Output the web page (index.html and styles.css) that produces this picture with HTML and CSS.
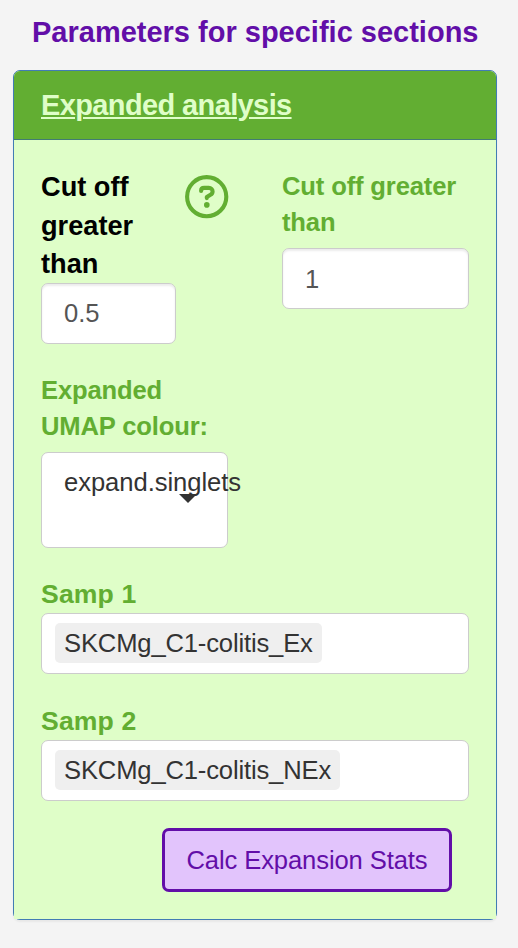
FILE: index.html
```html
<!DOCTYPE html>
<html lang="en">
<head>
<meta charset="utf-8">
<title>Parameters</title>
<link rel="stylesheet" href="styles.css">
</head>
<body>
<h1 class="title">Parameters for specific sections</h1>
<section class="panel">
  <header class="panel-head"><a class="panel-link">Expanded analysis</a></header>
  <div class="panel-body">
    <div class="row cutoffs">
      <div class="cutoff-help">
        <div class="field small">
          <label class="label dark">Cut off<br>greater<br>than</label>
          <div class="control">0.5</div>
        </div>
        <svg class="help" viewBox="0 0 44 44" fill="none" stroke="#62ae32">
          <circle cx="21.7" cy="21.7" r="19.6" stroke-width="4.1"/>
          <path d="M16.1 15.9C16.1 14.1 17.3 12.9 19.1 12.9H23.8C26.1 12.9 27.6 14.4 27.6 16.4C27.6 17.9 26.8 19 25.5 19.7L21.8 21.9V23.1" stroke-width="4.1" stroke-linecap="round" stroke-linejoin="round"/>
          <circle cx="21.8" cy="29.9" r="2.8" fill="#62ae32" stroke="none"/>
        </svg>
      </div>
      <div class="field half">
        <label class="label">Cut off greater<br>than</label>
        <div class="control gap">1</div>
      </div>
    </div>
    <div class="field half umap">
      <label class="label">Expanded<br>UMAP colour:</label>
      <div class="control select gap">expand.singlets<i class="caret"></i></div>
    </div>
    <div class="field samp1">
      <label class="label samp">Samp 1</label>
      <div class="control tags"><span class="tag ex">SKCMg_C1-colitis_Ex</span></div>
    </div>
    <div class="field samp2">
      <label class="label samp">Samp 2</label>
      <div class="control tags"><span class="tag nex">SKCMg_C1-colitis_NEx</span></div>
    </div>
    <button class="calc" type="button">Calc Expansion Stats</button>
  </div>
</section>
</body>
</html>
```
FILE: styles.css
```css
* { box-sizing: border-box; }
body {
  margin: 0;
  height: 948px;
  overflow: hidden;
  background: #f4f4f4;
  font-family: "Liberation Sans", Arial, sans-serif;
  font-size: 25.6px;
  line-height: 36px;
  color: #333;
}
.title {
  margin: 0 0 0 32px;
  padding-top: 12px;
  height: 70px;
  font-size: 29px;
  line-height: 40px;
  color: #620ea8;
  white-space: nowrap;
}
.panel {
  width: 484px;
  height: 850px;
  margin-left: 13px;
  border: 1px solid #427cb4;
  border-radius: 7px;
  background: #dffec8;
  box-shadow: 0 2px 2px rgba(0, 0, 0, .05);
}
.panel-head {
  height: 69px;
  padding: 14px 27px;
  border-bottom: 1px solid #427c72;
  border-radius: 6px 6px 0 0;
  background: #62ae32;
  font-size: 29px;
  line-height: 40px;
  font-weight: 700;
  letter-spacing: -.62px;
}
.panel-link {
  color: #dffec8;
  text-decoration: underline;
  text-decoration-thickness: 2px;
  text-underline-offset: 2px;
}
.panel-body {
  display: flex;
  flex-direction: column;
  height: 779px;
  padding: 28px 27px 0;
  background: #dffec8;
}
.row { display: flex; justify-content: space-between; }
.cutoff-help { display: flex; gap: 9px; }
.field { display: flex; flex-direction: column; }
.small { width: 135px; }
.half { width: 187px; }
.label {
  font-weight: 700;
  color: #62ae32;
  white-space: nowrap;
  letter-spacing: -.15px;
}
.dark {
  height: 115px;
  color: #000;
  font-size: 27.2px;
  line-height: 38.5px;
  letter-spacing: 0;
}
.samp {
  height: 35px;
  font-size: 26.6px;
  line-height: 35px;
  letter-spacing: .15px;
}
.control {
  height: 61px;
  padding: 11px 22px;
  border: 1px solid #ccc;
  border-radius: 7px;
  background: #fff;
  color: #555;
  white-space: nowrap;
  box-shadow: inset 0 2px 2px rgba(0, 0, 0, .075);
}
.gap { margin-top: 8px; padding-top: 12px; }
.help { width: 44px; height: 44px; margin-top: 7px; }
.umap { margin-top: 28px; }
.select {
  position: relative;
  height: 96px;
  padding-top: 11px;
  color: #333;
  letter-spacing: -.05px;
  box-shadow: none;
}
.caret {
  position: absolute;
  left: 137px;
  top: 41px;
  border: 9px solid transparent;
  border-top-color: #333;
  border-bottom: 0;
}
.samp1, .samp2 { margin-top: 29px; }
.samp2 { margin-top: 30px; }
.samp + .tags { margin-top: 1px; }
.tags { padding: 9px 13px; box-shadow: none; }
.tag {
  display: block;
  height: 40px;
  padding: 2px 9px;
  border-radius: 5px;
  background: #efefef;
  color: #333;
  letter-spacing: -.16px;
}
.ex { width: 267px; }
.nex { width: 285px; }
.calc {
  width: 290px;
  height: 64px;
  margin: 27px 17px 0 0;
  padding: 0;
  align-self: flex-end;
  border: 3px solid #620ea8;
  border-radius: 7px;
  background: #e2c4fc;
  color: #620ea8;
  font: inherit;
  letter-spacing: -.11px;
  white-space: nowrap;
}
```
